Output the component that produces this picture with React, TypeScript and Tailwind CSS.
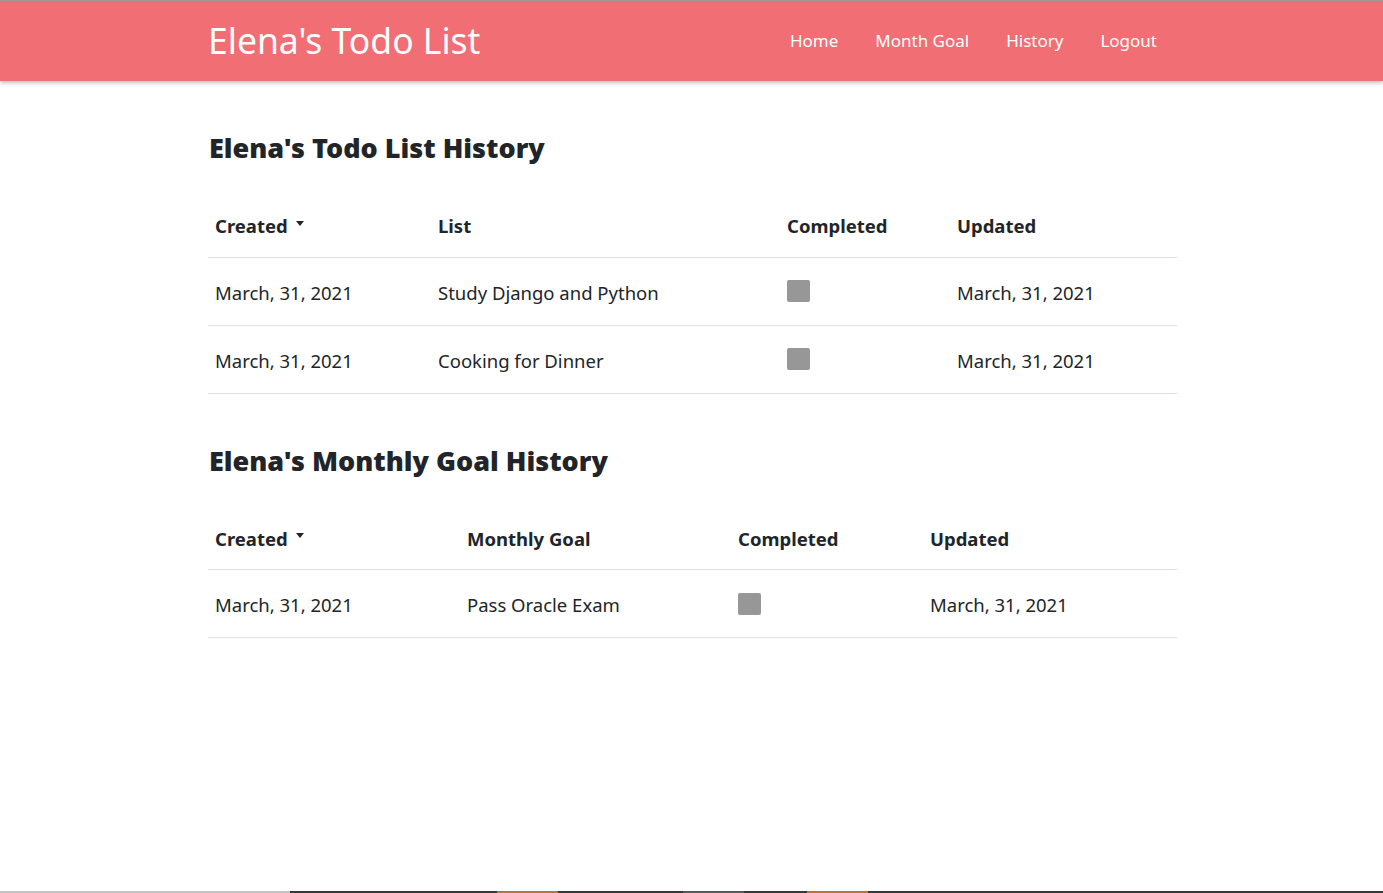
import { FC } from "react"

type Row = { created: string, item: string, done: boolean, updated: string }

type Column = { label: string, width: string, caret?: boolean }

const todoColumns: Column[] = [
	{ label: "Created", width: "w-[223px]", caret: true },
	{ label: "List", width: "w-[349px]" },
	{ label: "Completed", width: "w-[170px]" },
	{ label: "Updated", width: "w-[227px]" },
]

const goalColumns: Column[] = [
	{ label: "Created", width: "w-[252px]", caret: true },
	{ label: "Monthly Goal", width: "w-[271px]" },
	{ label: "Completed", width: "w-[192px]" },
	{ label: "Updated", width: "w-[254px]" },
]

const todoRows: Row[] = [
	{ created: "March, 31, 2021", item: "Study Django and Python", done: false, updated: "March, 31, 2021" },
	{ created: "March, 31, 2021", item: "Cooking for Dinner", done: false, updated: "March, 31, 2021" },
]

const goalRows: Row[] = [
	{ created: "March, 31, 2021", item: "Pass Oracle Exam", done: false, updated: "March, 31, 2021" },
]

const NavBar = () => {
	const links = ["Home", "Month Goal", "History", "Logout"]

	return (
		<nav className="h-[81px] bg-[#f06e74] border-t border-[#9a9a9a] shadow-[0_2px_4px_rgba(0,0,0,0.25)] relative z-10">
			<div className="w-[968px] ml-[208px] h-full flex items-center justify-between">
				<a className="text-white text-[35.5px] leading-none">Elena's Todo List</a>
				<ul className="flex items-center gap-[37px] pr-[19px]">
					{links.map((l) => (
						<li key={l} className="text-white text-[17px]">{l}</li>
					))}
				</ul>
			</div>
		</nav>
	)
}

const Checkbox = () => (
	<span className="block w-[23px] h-[22px] rounded-[2px] bg-[#979797]" />
)

const HistoryTable: FC<{ title: string, columns: Column[], rows: Row[] }> = ({ title, columns, rows }) => {
	return (
		<section>
			<h3 className="text-[27px] leading-[34px] font-black text-[#212529] pl-[1px]">{title}</h3>
			<table className="w-full mt-[29px] table-fixed border-collapse text-[#212529]">
				<thead>
					<tr className="border-b border-[#dee2e6] h-[63px]">
						{columns.map((c) => (
							<th key={c.label} className={`${c.width} text-left font-bold text-[18.5px] px-[7px] pt-[2px]`}>
								<span className="inline-flex items-center gap-[8px]">
									{c.label}
									{c.caret && <span className="w-0 h-0 border-x-[4.5px] border-x-transparent border-t-[5px] border-t-[#212529] mb-[6px]" />}
								</span>
							</th>
						))}
					</tr>
				</thead>
				<tbody>
					{rows.map((r, i) => (
						<tr key={i} className="border-b border-[#dee2e6] h-[68px] text-[18.5px]">
							<td className="px-[7px] pt-[3px]">{r.created}</td>
							<td className="px-[7px] pt-[3px]">{r.item}</td>
							<td className="px-[7px]"><Checkbox /></td>
							<td className="px-[7px] pt-[3px]">{r.updated}</td>
						</tr>
					))}
				</tbody>
			</table>
		</section>
	)
}

const TaskbarStrip = () => (
	<div className="mt-auto h-[2px] flex">
		<div className="w-[290px] bg-[#c4c4c4]" />
		<div className="w-[207px] bg-[#323a3a]" />
		<div className="w-[61px] bg-[#b8733a]" />
		<div className="w-[125px] bg-[#323a3a]" />
		<div className="w-[61px] bg-[#555b5b]" />
		<div className="w-[63px] bg-[#323a3a]" />
		<div className="w-[61px] bg-[#b8733a]" />
		<div className="flex-1 bg-[#323a3a]" />
	</div>
)

export default function App() {
	return (
		<div className="min-h-screen flex flex-col bg-white font-['Noto_Sans',sans-serif]">
			<NavBar />
			<main className="w-[969px] ml-[208px] pt-[50px] flex flex-col gap-[50px]">
				<HistoryTable title="Elena's Todo List History" columns={todoColumns} rows={todoRows} />
				<HistoryTable title="Elena's Monthly Goal History" columns={goalColumns} rows={goalRows} />
			</main>
			<TaskbarStrip />
		</div>
	)
}
